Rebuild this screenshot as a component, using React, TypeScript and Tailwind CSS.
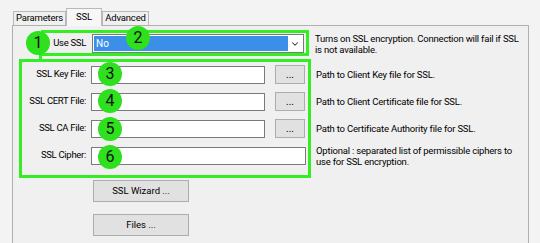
import { ChevronDown } from 'lucide-react';

const font = { fontFamily: 'Roboto, "Liberation Sans", sans-serif' };

function Label({ text }: { text: string }) {
  return (
    <div className="w-[73px] shrink-0 whitespace-nowrap text-right text-[9.5px] tracking-[-0.3px] text-black">
      {text}
    </div>
  );
}

function TextBox({ wide }: { wide?: boolean }) {
  return (
    <div
      className={`h-[18px] shrink-0 border border-[#7a7a7a] bg-white ${wide ? 'w-[215px]' : 'w-[174px]'}`}
    ></div>
  );
}

function Dots() {
  return (
    <div className="ml-[10px] flex h-[19px] w-[30px] shrink-0 items-center justify-center border border-[#adadad] bg-[#e1e1e1] text-[10px] leading-none text-black">
      ...
    </div>
  );
}

function Desc({ lines }: { lines: string[] }) {
  return (
    <div className="whitespace-nowrap text-[9.5px] leading-[11px] tracking-[-0.2px] text-black">
      {lines.map((l) => (
        <div key={l}>{l}</div>
      ))}
    </div>
  );
}

function FileRow({ label, desc }: { label: string; desc: string }) {
  return (
    <div className="flex h-[27px] items-center">
      <Label text={label} />
      <div className="ml-[5px]">
        <TextBox />
      </div>
      <Dots />
      <div className="ml-[11px]">
        <Desc lines={[desc]} />
      </div>
    </div>
  );
}

function Marker({ n, x, y }: { n: number; x: number; y: number }) {
  return (
    <div
      className="absolute flex h-[24px] w-[24px] items-center justify-center rounded-full bg-[#2ee01e] text-[16px] text-[#111]"
      style={{ left: x - 12, top: y - 12 }}
    >
      {n}
    </div>
  );
}

export default function App() {
  return (
    <div className="relative h-[243px] w-[540px] overflow-hidden bg-[#f3f3f3]" style={font}>
      {/* Tabs */}
      <div className="flex h-[25px] items-end pl-[13px] text-[9.5px] tracking-[-0.2px] text-black">
        <div className="flex h-[14px] w-[53px] items-center justify-center border border-b-0 border-[#b9b9b9] bg-[#f0f0f0]">
          Parameters
        </div>
        <div className="relative z-10 -mb-px flex h-[18px] w-[36px] items-start justify-center border border-b-0 border-[#b9b9b9] bg-[#f7f7f7] pt-[1px]">
          SSL
        </div>
        <div className="flex h-[14px] w-[47px] items-center justify-center border border-b-0 border-[#b9b9b9] bg-[#f0f0f0]">
          Advanced
        </div>
      </div>

      {/* Tab page */}
      <div className="ml-[12px] h-[230px] w-[517px] border border-[#b0b0b0] bg-[#f0f0f0] pt-[4px]">
        <div className="flex h-[27px] items-center">
          <Label text="Use SSL" />
          <div className="ml-[6px] flex h-[19px] w-[212px] shrink-0 items-center border border-[#7a7a7a] bg-white p-[1px]">
            <div className="flex h-full flex-1 items-center bg-[#3b8fe8] pl-[2px] text-[10px] text-white">No</div>
            <div className="flex w-[14px] items-center justify-center">
              <ChevronDown className="h-[10px] w-[10px] text-[#333]" strokeWidth={2.5} />
            </div>
          </div>
          <div className="ml-[11px] pt-[1px]">
            <Desc lines={['Turns on SSL encryption. Connection will fail if SSL', 'is not available.']} />
          </div>
        </div>

        <div className="mt-[4px]">
          <FileRow label="SSL Key File:" desc="Path to Client Key file for SSL." />
          <FileRow label="SSL CERT File:" desc="Path to Client Certificate file for SSL." />
          <FileRow label="SSL CA File:" desc="Path to Certificate Authority file for SSL." />
          <div className="flex h-[27px] items-center">
            <Label text="SSL Cipher:" />
            <div className="ml-[5px]">
              <TextBox wide />
            </div>
            <div className="ml-[10px]">
              <Desc lines={['Optional : separated list of permissible ciphers to', 'use for SSL encryption.']} />
            </div>
          </div>
        </div>

        <div className="ml-[80px] mt-[11px] flex w-[96px] flex-col gap-[12px]">
          <div className="flex h-[22px] items-center justify-center border border-[#adadad] bg-[#e1e1e1] text-[9.5px] text-black">
            SSL Wizard ...
          </div>
          <div className="flex h-[22px] items-center justify-center border border-[#adadad] bg-[#e1e1e1] text-[9.5px] text-black">
            Files ...
          </div>
        </div>
      </div>

      {/* Annotations */}
      <div className="absolute left-[41px] top-[30px] h-[26px] w-[268px] border-[3px] border-[#33ee22]"></div>
      <div className="absolute left-[39px] top-[44px] h-[16px] w-[3px] bg-[#33ee22]"></div>
      <div className="absolute left-[19px] top-[59px] h-[119px] w-[292px] border-[3px] border-[#33ee22]"></div>
      <Marker n={1} x={38} y={43} />
      <Marker n={2} x={138} y={38} />
      <Marker n={3} x={110} y={74} />
      <Marker n={4} x={110} y={101} />
      <Marker n={5} x={110} y={129} />
      <Marker n={6} x={110} y={157} />
    </div>
  );
}
